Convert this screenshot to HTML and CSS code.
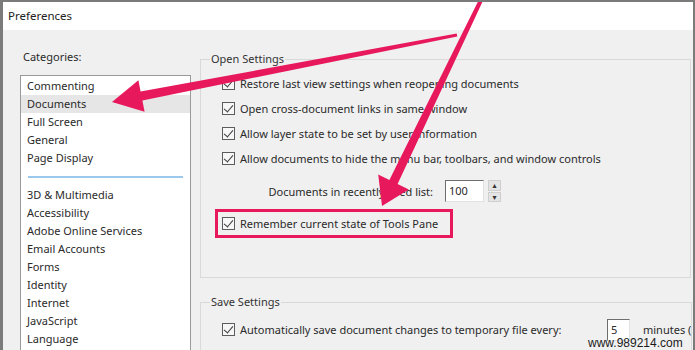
FILE: index.html
```html
<!DOCTYPE html>
<html lang="en">
<head>
  <meta charset="UTF-8">
  <title>Preferences</title>
  <link rel="stylesheet" href="styles.css">
</head>
<body>
  <div class="window">
    <div class="titlebar">Preferences</div>

    <div class="content">
      <div class="categories">
        <div class="cat-label">Categories:</div>
        <div class="listbox">
          <div class="item">Commenting</div>
          <div class="item selected">Documents</div>
          <div class="item">Full Screen</div>
          <div class="item">General</div>
          <div class="item">Page Display</div>
          <div class="sep"></div>
          <div class="item">3D &amp; Multimedia</div>
          <div class="item">Accessibility</div>
          <div class="item">Adobe Online Services</div>
          <div class="item">Email Accounts</div>
          <div class="item">Forms</div>
          <div class="item">Identity</div>
          <div class="item">Internet</div>
          <div class="item">JavaScript</div>
          <div class="item">Language</div>
        </div>
      </div>

      <div class="settings">
        <fieldset class="group open-group">
          <legend>Open Settings</legend>
          <div class="check-row"><span class="cb"></span>Restore last view settings when reopening documents</div>
          <div class="check-row"><span class="cb"></span>Open cross-document links in same window</div>
          <div class="check-row"><span class="cb"></span>Allow layer state to be set by user information</div>
          <div class="check-row"><span class="cb"></span>Allow documents to hide the menu bar, toolbars, and window controls</div>

          <div class="recent-row">
            <span>Documents in recently used list:</span>
            <span class="field recent-field">100</span>
            <span class="spin">
              <span class="spin-btn">&#9652;</span>
              <span class="spin-btn">&#9662;</span>
            </span>
          </div>

          <div class="highlight">
            <div class="check-row"><span class="cb"></span>Remember current state of Tools Pane</div>
          </div>
        </fieldset>

        <fieldset class="group save-group">
          <legend>Save Settings</legend>
          <div class="check-row save-row">
            <span class="cb"></span>
            <span class="save-text">Automatically save document changes to temporary file every:</span>
            <span class="field save-field">5</span>
            <span class="minutes">minutes (</span>
          </div>
        </fieldset>
      </div>
    </div>

    <!-- callout arrows drawn over the dialog -->
    <svg class="arrows" viewBox="0 0 695 350" width="695" height="350">
      <polygon points="456.7,33.5 140.6,91.6 138.4,80.3 112,102 144.6,111.7 142.4,100.4 457.3,36.5" />
      <polygon points="480.2,-2.9 389.4,180 378.2,174.6 382,206 408.8,189.4 397.6,184 483.8,-1.1" />
    </svg>

    <div class="watermark">www.989214.com</div>
  </div>
</body>
</html>
```

FILE: styles.css
```css
* { box-sizing: border-box; margin: 0; padding: 0; }

body {
  font-family: "Noto Sans", "DejaVu Sans", sans-serif;
  font-size: 11px;
  color: #2a2a2a;
  background: #f0f0f0;
  width: 695px;
  height: 350px;
  overflow: hidden;
}

.window {
  position: relative;
  width: 695px;
  height: 350px;
  border: 2px solid #7b7b7b;
  border-left-width: 3px;
  border-bottom: none;
  background: #f0f0f0;
  overflow: hidden;
  display: flex;
  flex-direction: column;
}

.titlebar {
  height: 28px;
  line-height: 28px;
  padding-left: 5px;
  background: #fff;
  color: #222;
  font-size: 11.5px;
  flex-shrink: 0;
}

.content {
  display: flex;
  flex: 1;
  min-height: 0;
}

/* left column */
.categories {
  width: 197px;
  flex-shrink: 0;
  padding: 19px 0 0 17px;
}

.cat-label {
  height: 16px;
  line-height: 16px;
  padding-left: 3px;
  margin-bottom: 10px;
}

.listbox {
  width: 171px;
  height: 300px;
  background: #fff;
  border: 1px solid #9a9a9a;
  padding-top: 1px;
}

.item {
  height: 18px;
  line-height: 18px;
  padding-left: 6px;
  white-space: nowrap;
}

.item.selected {
  background: #e6e6e6;
}

.sep {
  height: 2px;
  margin: 9px 7px 8px;
  background: #9cc8ec;
}

/* right column */
.settings {
  flex: 1;
  padding-top: 21px;
}

.group {
  width: 491px;
  border: 1px solid #d9d9d9;
  padding: 4px 0 39px 9px;
}

.group legend {
  line-height: 16px;
  padding: 0 1px;
  color: #333;
}

.check-row {
  display: flex;
  align-items: center;
  height: 25px;
  margin-left: 12px;
  white-space: nowrap;
}

.cb {
  position: relative;
  width: 13px;
  height: 13px;
  flex-shrink: 0;
  margin-right: 5px;
  border: 1px solid #5c5c5c;
  background: #f7f7f7;
}

.cb::after {
  content: "";
  position: absolute;
  left: 3px;
  top: 0px;
  width: 4px;
  height: 8px;
  border: solid #3a3a3a;
  border-width: 0 1.5px 1.5px 0;
  transform: rotate(40deg);
}

.recent-row {
  display: flex;
  justify-content: flex-end;
  align-items: center;
  width: 291px;
  height: 22px;
  margin-top: 9px;
  white-space: nowrap;
}

.field {
  height: 22px;
  line-height: 20px;
  padding-left: 3px;
  background: #fff;
  border: 1px solid #e2e2e2;
  border-top-color: #6e6e6e;
  border-left-color: #6e6e6e;
}

.recent-field {
  width: 39px;
  margin-left: 12px;
}

.spin {
  display: flex;
  flex-direction: column;
  width: 13px;
  height: 22px;
  margin-left: 4px;
  gap: 1px;
}

.spin-btn {
  flex: 1;
  background: #e4e4e4;
  border: 1px solid #cfcfcf;
  font-size: 8px;
  line-height: 8px;
  text-align: center;
  color: #333;
}

.highlight {
  width: 238px;
  height: 29px;
  margin: 7px 0 0 5px;
  border: 3px solid #e8185d;
  padding-left: 4px;
}

.highlight .check-row {
  margin-left: 0;
  height: 23px;
}

.save-group {
  margin-top: 16px;
  padding-top: 7px;
}

.save-text {
  width: 367px;
}

.save-field {
  width: 23px;
}

.minutes {
  margin-left: 13px;
}

/* overlays */
.arrows {
  position: absolute;
  left: -3px;
  top: -2px;
  pointer-events: none;
}

.arrows polygon {
  fill: #e8185d;
}

.watermark {
  position: absolute;
  left: 585px;
  top: 333px;
  font-family: "Liberation Sans", Arial, sans-serif;
  font-size: 12px;
  line-height: 16px;
  color: #1a1a1a;
}
```
